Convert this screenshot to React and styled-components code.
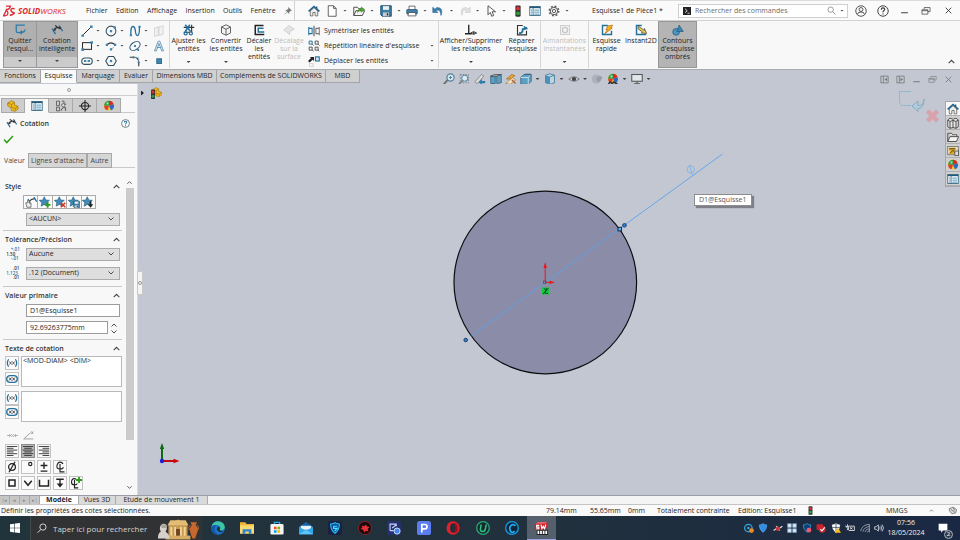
import React from "react";
import styled, { createGlobalStyle, css } from "styled-components";

const BLUE = "#23709b";
const INK = "#333";

const GlobalStyle = createGlobalStyle`
  *, *::before, *::after { box-sizing: border-box; }
  body { margin: 0; font-family: "Open Sans", "Noto Sans", sans-serif; font-size: 7px; line-height: 8px; color: #1e1e1e; }
  button, input, select, textarea { font: inherit; color: inherit; margin: 0; padding: 0; border: 0; border-radius: 0; background: none; outline: 0; }
`;

/* ---------- icons (16 x 16 drawings) ---------- */

const line = (d, stroke = BLUE, w = 1.8) => (
  <path d={d} fill="none" stroke={stroke} strokeWidth={w} />
);
const star = (
  <path d="M7 1l2 4.300 4.800.500-3.600 3.100 1.100 4.700L7 11.200l-4.200 2.400 1-4.700L.300 5.800l4.700-.500z" fill="#3e8cb8" stroke="#20577c" strokeWidth=".8" />
);
const beachBall = (
  <>
    <circle cx="8" cy="7.500" r="6.500" fill="#f4c61c" />
    <path d="M8 7.500V1a6.500 6.500 0 0 0-6.500 6.500z" fill="#2b9f48" />
    <path d="M8 7.500V1a6.500 6.500 0 0 1 6.200 4.500z" fill="#d92b24" />
    <path d="M8 7.500l6.200-2a6.500 6.500 0 0 1-3.500 8z" fill="#2a66c6" />
    <path d="M8 7.500H1.500a6.500 6.500 0 0 0 4.500 6.200z" fill="#e23b2e" />
    <circle cx="6" cy="4.500" r="1.500" fill="#fff" opacity=".6" />
  </>
);
const part = (
  <>
    <path d="M1 4l5-3 4 2v4l4 1 1 4-4 3-5-1-1-4-4-2z" fill="#f0b91e" stroke="#a8790b" />
    <path d="M1 4l5 2 4-3M6 6v4l5 1 4-3M11 11v3" fill="none" stroke="#a8790b" />
  </>
);
const listIcon = (
  <>
    <rect x="1" y="2" width="14" height="12" fill="#fff" stroke="#3f6b84" strokeWidth="1.200" />
    <path d="M1 3.200h14" stroke="#225a78" strokeWidth="2" />
    <path d="M5.500 4v10" stroke="#225a78" />
    <path d="M7 6.800h6.500M7 9.500h6.500M7 12.200h6.500M2.500 6.800h2M2.500 9.500h2M2.500 12.200h2" stroke="#2d7ea8" strokeWidth="1.100" />
  </>
);
const dimension = (
  <>
    {line("M4.500 7.500q3-4 7.500-2.500", INK, 1.600)}
    {line("M1.500 6L6 13.500", BLUE, 1.800)}
    {line("M11 2l4.500 7.500", BLUE, 1.800)}
    <path d="M3 9l1.500-4 2.500 3.500zM12 3l1.500 4-4-.500z" fill={INK} />
    <path d="M5.500 2l3 2" stroke={INK} strokeWidth="1.500" />
  </>
);
const cube = (
  <>
    <path d="M2 4l6-3 6 3v8l-6 3-6-3z" fill="#f2f2f2" stroke="#555" strokeWidth="1.200" />
    <path d="M2 4l6 3 6-3M8 7v8" fill="none" stroke="#555" strokeWidth="1.200" />
  </>
);
const home = (
  <>
    <path d="M3 8v6.500h3.500V10h3v4.500H13V8L8 3.500z" fill="#eee" stroke="#555" />
    <path d="M.800 8.500L8 2l7.200 6.500" fill="none" stroke="#1e5f86" strokeWidth="2" />
    <path d="M11.500 2v3" stroke="#1e5f86" strokeWidth="1.800" />
  </>
);
const folder = <path d="M1 3h5l1.500 2H13v2.500M1 3v11l3-6.500h11.500l-3 6.500H1" fill="#f3f3f3" stroke="#444" strokeWidth="1.200" />;
const floppy = (
  <>
    <path d="M1 1h14v14H3l-2-2z" fill="#3b7ea5" stroke="#1d4764" strokeWidth="1.200" />
    <rect x="4" y="1.500" width="8" height="5" fill="#e8eef2" />
    <rect x="4" y="10" width="8" height="5" fill="#c5cdd3" />
    <rect x="9" y="11" width="2" height="3" fill="#333" />
  </>
);
const traffic = (
  <>
    <rect x="4.500" y=".500" width="7" height="15" rx="1.500" fill="#333" />
    <circle cx="8" cy="4.500" r="2.500" fill="#e23030" />
    <circle cx="8" cy="11" r="2.500" fill="#27a53a" />
  </>
);
const brackets = (
  <>
    {line("M3.500 3Q0 8 3.500 13M12.500 3Q16 8 12.500 13", BLUE, 1.700)}
    {line("M4.500 6l3 4M7.500 6l-3 4M8.500 6l3 4M11.500 6l-3 4", "#444", 1.100)}
  </>
);
const capsule = (
  <>
    <rect x="1" y="3.500" width="14" height="9" rx="4.500" fill="none" stroke={BLUE} strokeWidth="1.900" />
    {line("M4 6l3.500 4M7.500 6L4 10M8.500 6l3.500 4M12 6l-3.500 4", "#333", 1.200)}
  </>
);
const restore = (c) => (
  <>
    {line("M5 5V2.500h9.500v6.500H11", c, 1.100)}
    {line("M1.500 6H11v7H1.500zM1.500 7.500H11", c, 1.100)}
  </>
);
const lines = (rows) => (
  <>
    {rows.map(([a, b], i) => (
      <path key={i} d={`M${a} ${2 + i * 2.400}H${b}`} stroke="#333" strokeWidth="1.200" />
    ))}
  </>
);
const shield = (c, edge) => <path d="M8 1q3 2 6 2 0 8-6 12Q2 11 2 3q3 0 6-2z" fill={c} stroke={edge} />;

const glyphs = {
  swoosh: (
    <>
      {line("M4 1.500h6q-1 4-5 5", "#dc2c34", 1.700)}
      {line("M5 5q-2 6-4.500 9.500 6 .500 6-4 0-3-3-2", "#dc2c34", 1.700)}
      {line("M15.500 5q-5-1-5 1.500t3.500 3.500-5 4", "#dc2c34", 1.900)}
    </>
  ),
  pin: <path d="M9 1l6 6-2 .500-3 3V13L3.500 6.500H6l3-3zM6 10l-5 5" fill="#777" stroke="#777" />,
  home,
  page: <path d="M3 1h7l3.500 3.500V15H3zM10 1v3.500h3.500" fill="#fff" stroke="#555" strokeWidth="1.200" />,
  open: (
    <>
      {folder}
      <path d="M6 10q0-5 5-5V2.500L15.500 6 11 9.500V7.500Q8 7 6 10z" fill="#4fae2f" stroke="#2c7a17" strokeWidth=".6" />
    </>
  ),
  floppy,
  printer: (
    <>
      <path d="M4 6V1.500h8V6" fill="#fff" stroke="#444" />
      <rect x="1" y="6" width="14" height="6" rx="1" fill="#3d7fa6" stroke="#1d4f70" />
      <path d="M3.500 10h9l1 4.500h-11z" fill="#fff" stroke="#444" />
    </>
  ),
  undo: <path d="M1 3v7h7L5.500 7.500Q11 4 12 14q4-11-6-10.500L4 5.500z" fill="#3a83ae" stroke="#1f5b80" strokeWidth=".7" />,
  redo: <path d="M15 3v7H8l2.500-2.500Q5 4 4 14 0 3 10 3.500l2 2z" fill="#e2e2e2" stroke="#c2c2c2" strokeWidth=".7" />,
  cursor: <path d="M4 1v12l3-3 2 5 2.500-1-2-5H14z" fill="#fff" stroke="#444" strokeWidth="1.200" />,
  traffic,
  list: listIcon,
  gear: (
    <>
      <circle cx="8" cy="8" r="5" fill="#eee" stroke="#555" strokeWidth="1.300" />
      <circle cx="8" cy="8" r="6.400" fill="none" stroke="#555" strokeWidth="1.800" strokeDasharray="2.500 2.530" />
      <circle cx="8" cy="8" r="2.200" fill="none" stroke="#555" strokeWidth="1.200" />
    </>
  ),
  prompt: (
    <>
      <rect width="16" height="16" fill="#222" />
      {line("M4 3.500l4.500 4L4 11.500M9 12.500h4", "#fff", 1.600)}
    </>
  ),
  lens: (
    <>
      <circle cx="6.500" cy="6.500" r="4.800" fill="none" stroke="#888" strokeWidth="1.500" />
      {line("M10 10l5 5", "#888", 1.700)}
    </>
  ),
  user: (
    <>
      <circle cx="8" cy="8" r="7" fill="none" stroke="#444" strokeWidth="1.200" />
      <circle cx="8" cy="6" r="2.600" fill="none" stroke="#444" strokeWidth="1.200" />
      {line("M3.500 12.500q0-3.200 4.500-3.200t4.500 3.200", "#444", 1.200)}
    </>
  ),
  help: (
    <>
      <circle cx="8" cy="8" r="7" fill="none" stroke="#333" strokeWidth="1.200" />
      {line("M5.700 6.200q0-2.400 2.300-2.400t2.300 2q0 1.200-1.300 1.900T8 9.800M8 11.200v1.400", "#333", 1.500)}
    </>
  ),
  helpBlue: (
    <>
      <circle cx="8" cy="8" r="7" fill="#fff" stroke="#4a6270" strokeWidth="1.400" />
      {line("M5.700 6.200q0-2.400 2.300-2.400t2.300 2q0 1.200-1.300 1.900T8 9.800M8 11.200v1.600", BLUE, 1.800)}
    </>
  ),
  minimize: line("M2 12h12", "#333", 1.700),
  restore: restore("#333"),
  close: line("M3 3l10 10M13 3L3 13", "#333", 1.600),
  exitSketch: (
    <>
      {line("M14.500 1.500H3V9q0 2.500 2.500 2.500H9", "#2b7cab", 1.700)}
      <path d="M15.500 6q0 6-5 6v2.500L7 11l3.500-3v2Q13 10 15.500 6z" fill="#2b7cab" />
    </>
  ),
  dimension,
  lineTool: (
    <>
      {line("M3 13L13 3", "#222", 1.300)}
      <path d="M.500 12.500h3.500v3H.500zM12 .500h3.500v3.500H12z" fill="#3b85b0" />
    </>
  ),
  circleTool: (
    <>
      <circle cx="8" cy="8" r="6.500" fill="none" stroke="#35505f" strokeWidth="1.400" />
      <path d="M6.500 6.500h3v3h-3zM11.500 1.500h3v3h-3z" fill="#3b85b0" />
    </>
  ),
  spline: (
    <>
      {line("M2.500 14Q2 2 5 2t3.500 6 3 6T14 2", BLUE, 1.800)}
      <path d="M1 12.500h3v2.500H1zM12.500 1h3v2.500h-3z" fill="#3b85b0" />
    </>
  ),
  plane: <path d="M2 4l5-1.500V14l-5 1zM8 2.500L13.500 1v11.500L8 14z" fill="#f0f0f0" stroke="#d4d4d4" strokeWidth="1.200" />,
  rectTool: (
    <>
      <rect x="2" y="3.500" width="12" height="9" fill="none" stroke="#333" strokeWidth="1.400" />
      <path d="M.500 11h3.500v3.500H.500zM12.500 1.500h3.500V5h-3.500z" fill="#3b85b0" />
    </>
  ),
  arcTool: (
    <>
      {line("M3 6q5-4.500 10 0", "#333", 1.500)}
      {line("M8 12.500l4-3", "#999", 1)}
      <path d="M1 5h3v3H1zM12 5h3v3h-3zM6.500 11h3v3h-3z" fill="#3b85b0" />
    </>
  ),
  ellipseTool: (
    <>
      <ellipse cx="8" cy="8" rx="7.500" ry="5" transform="rotate(-35 8 8)" fill="none" stroke="#35607a" strokeWidth="1.500" />
      <path d="M6.700 6.700h2.600v2.600H6.700zM11 12h2.500v2.500H11z" fill="#3b85b0" />
    </>
  ),
  letterA: line("M2 14.500L7 1.500h2l5 13h-2.500L8 4.500l-3.500 10zM5 10h6", "#5b93b4", 1.200),
  slotTool: (
    <>
      <rect x="1" y="4" width="14" height="8.500" rx="4.200" fill="none" stroke="#35505f" strokeWidth="1.500" />
      <path d="M4 6.800h2.500v2.500H4zM9.500 6.800H12v2.500H9.500z" fill="#3b85b0" />
      {line("M4 8h8", "#3b85b0", 1)}
    </>
  ),
  hexTool: (
    <>
      <path d="M4.500 2h7L15 8l-3.500 6h-7L1 8z" fill="none" stroke="#35505f" strokeWidth="1.500" />
      <path d="M6.500 6.500h3v3h-3z" fill="#3b85b0" />
    </>
  ),
  filletTool: (
    <>
      {line("M1 3h5q7 0 7 7v5", "#333", 1.500)}
      {line("M7 3h6v6", "#9cc0d6", 1)}
      <path d="M5 1.500h2v3H5zM11.500 9h3v2h-3z" fill="#3b85b0" />
    </>
  ),
  pointTool: <rect x="5" y="5" width="6.500" height="6.500" fill="#3b85b0" stroke="#225c80" />,
  trim: (
    <>
      {line("M1 4.500h14M1 11h7M11.500 1v10", "#333", 1.500)}
      {line("M3 1l7 9M9 1L3 10", BLUE, 2)}
      <circle cx="3.500" cy="12.500" r="2" fill="none" stroke={BLUE} strokeWidth="1.700" />
      <circle cx="10.500" cy="12.500" r="2" fill="none" stroke={BLUE} strokeWidth="1.700" />
    </>
  ),
  cube,
  offset: (
    <>
      {line("M14 2H3v12h12", "#222", 2)}
      {line("M14 5.500H7v5h8", BLUE, 2)}
    </>
  ),
  offsetSurface: <path d="M1 8l7-6 7 5-6 3v4z" fill="#e4e4e4" stroke="#cfcfcf" strokeWidth="1.200" />,
  mirror: (
    <>
      {line("M8 1v14", "#333", 1.200)}
      {line("M1 2.500v11M1 4.500h4.500v7H1", BLUE, 1.400)}
      {line("M15 2.500v11M15 4.500h-4.500v7H15", "#777", 1.400)}
    </>
  ),
  pattern: (
    <>
      <path d="M1.500 1.500h4v4h-4z" fill="none" stroke={BLUE} strokeWidth="1.300" />
      <path d="M9.500 1.500h4v4h-4zM1.500 9.500h4v4h-4zM9.500 9.500h4v4h-4z" fill="none" stroke="#555" strokeWidth="1.300" />
      {line("M5.500 5.500l2 2M13.500 5.500l2 2M5.500 13.500l2 1.500M13.500 13.500l1.500 1.500", "#555", 1.200)}
    </>
  ),
  move: (
    <>
      <rect x="10" y="2.500" width="5" height="5.500" fill="#d8ebf5" stroke={BLUE} strokeWidth="1.500" />
      <path d="M0 8l4-4-1.500-1.500H8V8L6.200 6.200 2 10z" fill="#222" />
      <path d="M2 11.500h5v4H2z" fill="none" stroke="#aaa" strokeDasharray="1.500 1" />
    </>
  ),
  relations: (
    <>
      {line("M5 1v12M0 13h9", "#222", 1.800)}
      {line("M7.500 12q4-4 8 0-4 4-8 0z", "#333", 1.200)}
      <circle cx="11.500" cy="12" r="1.400" fill="#333" />
    </>
  ),
  repair: (
    <>
      {line("M14 9v5.500H2V2h7", "#333", 1.500)}
      {line("M4 12q5 1 5-5 3 0 5-3", BLUE, 2.500)}
      {line("M10.500 3l2 3.500 3-.500", BLUE, 1.800)}
    </>
  ),
  snaps: (
    <>
      <rect x="2" y="2" width="12" height="12" fill="#f2f2f2" stroke="#cdcdcd" strokeWidth="1.300" />
      <circle cx="8" cy="8" r="3.500" fill="none" stroke="#c4c4c4" strokeWidth="1.500" />
    </>
  ),
  rapid: (
    <>
      {line("M9 2H2v12h12V9", BLUE, 1.900)}
      <path d="M9 2.500l6.500-1-2.500 4h2L5 13l3.500-5.500H6.500z" fill="#f5b61b" stroke="#b0601a" strokeWidth=".9" />
    </>
  ),
  instant: (
    <>
      {line("M9 2H2v12h13", BLUE, 1.900)}
      <path d="M4.500 3l8 5.500v-2.500l3 6.500-7-.500 1.500-1.500-6-4z" fill="#f1d14c" stroke="#444" />
    </>
  ),
  contours: (
    <>
      <circle cx="5.500" cy="10.500" r="4.500" fill="#4b94be" stroke="#225c80" />
      <path d="M9.500 1.500L15 10H6.500z" fill="#3b85b0" stroke="#225c80" />
    </>
  ),
  zoomFit: (
    <>
      <circle cx="10" cy="6" r="4.800" fill="#d6e6ef" stroke="#56809a" strokeWidth="1.600" />
      {line("M6 9.500L1 15", "#666", 2.200)}
      {line("M8 6h4M10 4v4", "#457b9d", 1.200)}
    </>
  ),
  zoomArea: (
    <>
      <path d="M3 2h11v11H3z" fill="none" stroke="#777" strokeDasharray="2 1.500" />
      <circle cx="9" cy="7" r="4" fill="#d8eaf4" stroke="#5e8fae" strokeWidth="1.400" />
      {line("M6 10l-5 5", "#777", 2)}
    </>
  ),
  previous: (
    <>
      <path d="M1 12L10 2l3 2-7 9q-4 2-5-1z" fill="#ddd" stroke="#777" />
      <path d="M6 12l4.500-4v2.500H15v3h-4.500V16z" fill="#2f7fae" />
    </>
  ),
  section: (
    <>
      <path d="M1 4h6v10H1zM9 3l6-1v11l-6 1z" fill="#5ea0c4" stroke="#285b78" />
      <path d="M1 4l5-2h9L9 4z" fill="#ddd" stroke="#444" />
    </>
  ),
  dynamic: (
    <>
      <path d="M2 8l7-6 4 1.500L8 8z" fill="#f0a02c" stroke="#8a5a17" strokeWidth=".8" />
      <path d="M1 14l9-8 4 3-7 6z" fill="#f3e3bd" stroke="#8a6a30" strokeWidth=".8" />
      {line("M9 9l5 5", "#b4531c", 1.500)}
    </>
  ),
  viewCube: (
    <>
      <path d="M1 6l4-4h10v9l-4 4H1z" fill="#5ea0c4" stroke="#345e78" />
      <path d="M1 6h10v9M11 6l4-4" fill="none" stroke="#e1edf4" />
      <path d="M6.500 1.500h8v3" fill="none" stroke="#345e78" />
    </>
  ),
  display: (
    <>
      <path d="M2 3l6-2 6 2v10l-6 2-6-2z" fill="#b9d5e4" stroke="#3a7292" />
      <path d="M2 3l6 2v10l-6-2z" fill="#4a90b8" />
      <path d="M8 5l6-2" stroke="#3a7292" />
    </>
  ),
  eye: (
    <>
      {line("M1 8q7-6 14 0-7 6-14 0z", "#777", 1.200)}
      <circle cx="8" cy="8" r="2.800" fill="#444" />
    </>
  ),
  globe: (
    <>
      <circle cx="7" cy="8" r="6" fill="#aeb2bb" />
      <path d="M7 7q4-5 8-2-1 6-6 8z" fill="#9a9ea7" />
    </>
  ),
  scene: (
    <>
      {beachBall}
      {line("M2 15l2-3 3 2 2-2 5 3", "#333", 2)}
    </>
  ),
  monitor: (
    <>
      <rect x="1" y="2" width="14" height="9" fill="#e2e5ea" stroke="#555" strokeWidth="1.400" />
      {line("M8 11v3M4 14.500h8", "#555", 1.500)}
    </>
  ),
  paneLeft: (
    <>
      {line("M1.500 2h13v12h-13zM6 2v12", "#777", 1.400)}
      <path d="M12.500 5v6L8 8z" fill="#777" />
    </>
  ),
  paneRight: (
    <>
      {line("M1.500 2h13v12h-13zM6 2v12", "#777", 1.400)}
      <path d="M8 5v6l4.500-3z" fill="#777" />
    </>
  ),
  minimizeGray: line("M2 12h12", "#777", 1.700),
  restoreGray: restore("#777"),
  closeGray: line("M3 3l10 10M13 3L3 13", "#777", 1.500),
  part,
  partRoot: (
    <>
      <g transform="translate(3 0) scale(.85)">{part}</g>
      <g transform="translate(-2 3) scale(.75 .85)">{traffic}</g>
    </>
  ),
  config: (
    <>
      {line("M2 1.500h4v6H2zM2 9.500h4v5H2zM9 1.500h3v4h3", "#666", 1.300)}
      <circle cx="11" cy="7" r="2.200" fill="#ddd" stroke="#555" />
      {line("M8 14.500q2-6 6-4v4", "#666", 1.500)}
    </>
  ),
  target: (
    <>
      <circle cx="8" cy="8" r="4.800" fill="none" stroke="#222" strokeWidth="1.400" />
      {line("M8 0v16M0 8h16", "#222", 1.400)}
    </>
  ),
  ball: beachBall,
  check: line("M1.500 8l4 4.500L14.500 3", "#2f9e17", 2.200),
  styleApply: (
    <>
      {line("M6 7q3-4 7-3", "#333", 1.500)}
      {line("M4 4l3 5M12 1.500l3.500 6", "#23709b", 1.700)}
      <path d="M1 9h2.500V5.500l2 .500v3.500H8V15H2.500z" fill="#eee" stroke="#555" />
    </>
  ),
  starAdd: (<>{star}<path d="M11.500 8v7.500M7.700 11.800h7.600" stroke="#2e9a1b" strokeWidth="2.500" /></>),
  starDel: (<>{star}<path d="M9 9l6 6M15 9l-6 6" stroke="#d8301f" strokeWidth="2" /></>),
  starSave: (<>{star}<g transform="translate(6.500 6.500) scale(.6)">{floppy}</g></>),
  starLoad: (<>{star}<path d="M11.500 7v5" stroke="#222" strokeWidth="2.200" /><path d="M8 11h7l-3.500 4.500z" fill="#222" /></>),
  up: line("M3 11l5-5 5 5", "#444", 1.900),
  down: line("M3 5l5 5 5-5", "#444", 1.900),
  brackets,
  capsule,
  dimArrow: (
    <>
      {line("M0 8h5M11 8h5M6 6l4 4M10 6l-4 4", "#aaa", 1.300)}
      <path d="M3 5.500v5L6 8zM13 5.500v5L10 8z" fill="#aaa" />
    </>
  ),
  dimSlope: line("M1 13h14M1 13L11 4M12 2l3 4M15 2l-3 4", "#999", 1.300),
  alignLeft: lines([[1, 15], [1, 10], [1, 15], [1, 10], [1, 15], [1, 10]]),
  alignCenter: lines([[1, 15], [3, 13], [1, 15], [3, 13], [1, 15], [3, 13]]),
  alignRight: lines([[1, 15], [6, 15], [1, 15], [6, 15], [1, 15], [6, 15]]),
  diameter: (<><circle cx="8" cy="8" r="4.500" fill="none" stroke="#222" strokeWidth="1.700" />{line("M4 15L12 1", "#222", 1.700)}</>),
  degree: <circle cx="11" cy="4" r="2.200" fill="none" stroke="#222" strokeWidth="1.500" />,
  plusMinus: line("M8 1.500v9M3.500 6h9M3.500 13.500h9", "#222", 1.800),
  centerline: line("M12 4Q11 1.500 8 1.500T4 6t4 4.500 4-2.500M8 4v10.500H14", "#222", 1.500),
  square: <rect x="4" y="4" width="8" height="8" fill="none" stroke="#222" strokeWidth="2" />,
  vee: line("M3 5l5 6 5-6", "#222", 2),
  counterbore: line("M2 3.500v8.500h12V3.500", "#222", 2),
  depth: (<>{line("M3 3h10M8 3v7", "#222", 1.800)}<path d="M3.500 8.500h9L8 14z" fill="#222" /></>),
  centerAdd: (
    <>
      {line("M8 3Q6 1.500 4 2.500T2 7t4 3.500 3-2M6 4v10.500H11", "#222", 1.500)}
      <path d="M12 0v8M8 4h8" stroke="#2e9a1b" strokeWidth="2.400" />
    </>
  ),
  tolerance: (
    <g fontSize="6" fontWeight="600">
      <text x="5" y="4" fill={BLUE}>+.01</text>
      <text x="-1" y="10" fill="#333">1.50</text>
      <text x="5" y="16" fill={BLUE}>-.01</text>
    </g>
  ),
  precision: (
    <g fontSize="6" fontWeight="600">
      <text x="8" y="4" fill="#333">.01</text>
      <text x="-1" y="10" fill={BLUE}>1.123</text>
      <text x="8" y="16" fill="#333">.01</text>
    </g>
  ),
  library: (
    <>
      <path d="M1 4l3-2.500L8 3l4-1.500L15 4v9l-3 2-4-1-4 1-3-2z" fill="#e8e8e8" stroke="#444" strokeWidth="1.200" />
      {line("M1 4l3 2 4-1.500L12 6l3-2M4 6v9M8 4.500V14M12 6v9", "#444", 1.200)}
    </>
  ),
  folder,
  palette: (
    <>
      <rect x="1" y="2" width="14" height="11" fill="#e9e2c9" stroke="#666" />
      <path d="M2.500 3.500h9v3l-3 2 2 3.500h-8l2-3.500-2-2z" fill="#e0a91f" />
      {line("M3 5h8M4 11l4-4 3 4", "#4b3f12", 1.200)}
      <rect x="10.500" y="8" width="5" height="6" fill="#ddd" stroke="#444" />
    </>
  ),
  plug: <path d="M2 5l7-3 6 4-1 6-7 2-4-5zM5 6l7 5M9 3l3 5" fill="#ddd" stroke="#555" strokeWidth="1.200" />,
  /* taskbar */
  windows: <path d="M0 2l7-1v6.500H0zM8 .900L16 0v7.500H8zM0 8.500h7V15l-7-1zM8 8.500h8V16l-8-1z" fill="#fff" />,
  searchWhite: (<><circle cx="9.500" cy="6.500" r="5" fill="none" stroke="#e6e6e6" strokeWidth="1.400" />{line("M6 10.500L1 15.500", "#e6e6e6", 1.500)}</>),
  edge: (
    <>
      <circle cx="8" cy="8" r="7.800" fill="#1a74c9" />
      <path d="M.300 7Q2 0 8.500.200 15.500 1 15.800 7.500 15 11 10 10.500q2-5.500-3-6T.300 7z" fill="#3ec5a5" />
      <path d="M6.500 9.500q0-3 2.500-3 2 .500 1 3.500-.500 2 5 1.500-3 2-5.500 1T6.500 9.500z" fill="#1f2f38" />
      <path d="M.300 7q2.500-3.500 6-2Q3 7 4.500 12l3.500 3.800Q0 15 .300 7z" fill="#1458a8" />
    </>
  ),
  explorer: (
    <>
      <path d="M0 1.500h6l1.500 2H16V14H0z" fill="#f0b73a" />
      <path d="M0 5h16v9.500H0z" fill="#fbd971" />
      <path d="M3 14.500V9.500h10v5h-3V12H6v2.500z" fill="#2f83d0" />
    </>
  ),
  store: (
    <>
      {line("M5 5V1.500h6V5", "#2fa5ea", 1.500)}
      <rect x=".500" y="3.500" width="15" height="12" rx="1.500" fill="#f4f4f4" />
      <path d="M4.500 6.500h3v3h-3z" fill="#f25022" />
      <path d="M8.500 6.500h3v3h-3z" fill="#7fba00" />
      <path d="M4.500 10.500h3v3h-3z" fill="#00a4ef" />
      <path d="M8.500 10.500h3v3h-3z" fill="#ffb900" />
    </>
  ),
  mail: (
    <>
      <path d="M0 6.500L8 1l8 5.500V15H0z" fill="#1564b0" />
      <path d="M2 5.500h12V10H2z" fill="#e8f3fb" />
      <path d="M0 6.500l8 5 8-5V15H0z" fill="#2fa5ea" />
      <path d="M0 15l8-5 8 5z" fill="#5cc4f6" />
    </>
  ),
  shieldApp: (<><rect width="16" height="16" rx="2" fill="#1b2145" /><path d="M8 2q3 1.500 5 1.500 0 7-5 10.500-5-3.500-5-10.500 2 0 5-1.500z" fill="#0b4a94" stroke="#23c4f2" strokeWidth="1.200" />{line("M10.500 6H6.500v2.500h4L7.500 11.500", "#4be0ff", 1.400)}</>),
  bugApp: (
    <>
      <circle cx="8" cy="8" r="7.500" fill="#1a0a0c" stroke="#962029" />
      <path d="M4 5l3 1 2-2 1 2 3 1-2 2 1 3-3-1-2 2-1-3-3-1 2-2z" fill="#e5303a" />
    </>
  ),
  captureApp: (
    <>
      <rect width="16" height="16" rx="2" fill="#25316f" />
      {line("M3.500 11V3.500h7V6M3.500 11h4M6 8l5-4", "#c9d2ff", 1.300)}
      <circle cx="11.500" cy="11.500" r="3.500" fill="#4687e8" stroke="#dce7ff" />
    </>
  ),
  pApp: (
    <>
      <rect width="16" height="16" rx="3" fill="#5c7df0" />
      {line("M5.500 13V4h3.500q2.500 0 2.500 2.500T9 9H5.500", "#fff", 1.900)}
    </>
  ),
  opera: (
    <>
      <ellipse cx="8" cy="8" rx="7.500" ry="7.800" fill="#e3202c" />
      <ellipse cx="8" cy="8" rx="3.300" ry="5.500" fill="#233039" />
      <path d="M8 2.500q5-1 5.500 5.500T8 13.500q3.500-1 3.500-5.500T8 2.500z" fill="#a10d18" />
    </>
  ),
  uApp: (<><circle cx="8" cy="8" r="7.200" fill="#15282c" stroke="#28a876" strokeWidth="1.500" />{line("M6 4L5 9q0 3 2.700 3t3-3l1-5", "#2fc086", 1.700)}</>),
  cApp: (<><circle cx="8" cy="8" r="7.200" fill="#102438" stroke="#169be0" strokeWidth="1.500" />{line("M12 5.500Q9.500 3 7 5T6 11t5 .500", "#22adf2", 2)}</>),
  swApp: (
    <>
      <path d="M1 3l4-2h10v7l-3 2H1z" fill="#c8202a" />
      <path d="M1 3l4-2h10l-2 2z" fill="#e8616a" />
      {line("M6 5H3v2h2.500v2H2.500M8 4l1 5 1.500-3L12 9l1.500-5", "#fff", 1.300)}
      <rect x="3" y="10" width="13" height="6" fill="#222" />
      <path d="M4 13h11" stroke="#fff" strokeWidth="3.500" strokeDasharray="2 1" />
    </>
  ),
  trayEye: (<><circle cx="7" cy="8" r="6" fill="none" stroke="#34a8df" strokeWidth="2" /><circle cx="7" cy="8" r="2" fill="#34a8df" /><circle cx="12" cy="12" r="3.800" fill="#f08a24" /></>),
  trayShield: shield("#2f8fe6", "#5aaef5"),
  trayRed: (<>{line("M1 12l4-3M15 5l-4 3M5 5l3 3M11 12l-3-3", "#d8dce0", 2)}<circle cx="8" cy="9" r="3.500" fill="#cf3640" /></>),
  trayGrid: <path d="M1 1h6v6H1zM9 1h6v6H9zM1 9h6v6H1zM9 9h6v6H9z" fill="#dfe8f2" stroke="#7aa0c8" />,
  trayGuard: (<>{shield("#123d78", "#39b6f5")}<circle cx="11" cy="11.500" r="3.800" fill="#ef5a6b" /></>),
  trayCheck: (<><rect x="1" y="2" width="10" height="9" fill="#d3202a" /><circle cx="10" cy="10" r="5.500" fill="#c9252d" />{line("M7 10l2.500 2.500L14 7", "#fff", 1.800)}</>),
  trayDefender: (<>{shield("#fff", "#fff")}{line("M8 1v13M2 7h12", "#26354c", 1.200)}<path d="M11 7l5 8.500H6z" fill="#f6bd22" /></>),
  battery: line("M5 5h10v7H6M1 4l5 7M4 2v4M1 6h5q0 5-3 5M8 7l4 3M12 7l-4 3", "#eee", 1.300),
  wifi: line("M1 13Q3 3 15 2M4.500 14Q6 7 15 5.500M8 14.500q1-5 7-5.500M11.500 15q.500-2 3.500-2.500M15 2v13", "#aeb6c0", 1.200),
  sound: line("M1 6h2.500L7 3v10L3.500 10H1zM9 6q1.500 2 0 4M11 4q3 4 0 8M13 2.500q4.500 5.500 0 11", "#e4e8ee", 1.200),
  note: <path d="M1 1h14v11H8l-3 3.500V12H1z" fill="#fff" />,
};

const Svg = styled.svg`
  display: block;
  flex: none;
  width: ${(p) => p.$size}px;
  height: ${(p) => p.$size}px;
`;
const Icon = ({ name, size = 11 }) => (
  <Svg viewBox="0 0 16 16" $size={size} aria-hidden="true">{glyphs[name]}</Svg>
);

const Caret = styled.span`
  flex: none;
  width: 4px;
  height: 2px;
  background: #444;
  clip-path: polygon(0 0, 100% 0, 50% 100%);
`;

/* ---------- title bar ---------- */

const Page = styled.div`
  display: flex;
  flex-direction: column;
  min-height: 100vh;
  background: #c3c7d2;
`;
const TitleBar = styled.header`
  display: flex;
  align-items: center;
  height: 21px;
  background: #fafafa;
  border-top: 1px solid #dcdcdc;
  border-bottom: 1px solid #d2d2d2;
`;
const Logo = styled.div`
  display: flex;
  align-items: center;
  gap: 3px;
  width: 76px;
  padding-left: 3px;
  color: #dc2c34;
  font-style: italic;
  font-size: 8px;
`;
const Menu = styled.nav`
  display: flex;
  align-items: center;
  justify-content: space-between;
  width: 219px;
  height: 20px;
  padding: 0 2px 0 10px;
  border-right: 1px solid #d2d2d2;
`;
const PlainButton = styled.button`
  display: flex;
  align-items: center;
  justify-content: center;
  flex: none;
  width: ${(p) => (p.$w ? p.$w + "px" : "auto")};
  height: 14px;
  white-space: nowrap;
`;
const QuickBar = styled.div`
  display: flex;
  align-items: center;
  padding-left: 7px;
`;
const DocTitle = styled.h1`
  flex: 1;
  margin: 0;
  padding-left: 21px;
  font-size: 7px;
  font-weight: 400;
`;
const SearchBox = styled.label`
  display: flex;
  align-items: center;
  gap: 4px;
  width: 170px;
  height: 14px;
  padding: 0 3px 0 4px;
  background: #fff;
  border: 1px solid #cfcfcf;
`;
const SearchInput = styled.input`
  flex: 1;
  min-width: 0;
  &::placeholder { color: #6c6c6c; opacity: 1; }
`;
const WindowButtons = styled.div`
  display: flex;
  align-items: center;
  padding-left: 2px;
`;

const quick = [
  ["home", 24], ["page", 12, 14], ["open", 14, 12], ["floppy", 15, 12], ["printer", 14, 12],
  ["undo", 14, 13], ["redo", 13, 13], ["cursor", 14, 12], ["traffic", 16], ["list", 18], ["gear", 19, 8],
];

/* ---------- ribbon ---------- */

const Ribbon = styled.section`
  display: flex;
  height: 49px;
  padding: 0 0 1px 3px;
  background: #f8f8f8;
  border-bottom: 1px solid #a9abb0;
`;
const Big = styled.button`
  display: grid;
  grid-template-rows: 14px 1fr 12px;
  justify-items: center;
  align-items: center;
  flex: none;
  width: ${(p) => p.$w}px;
  padding-top: 2px;
  line-height: 8px;
  color: ${(p) => (p.$off ? "#bdbdbd" : "#1e1e1e")};
  ${(p) => p.$on && css`
    background: linear-gradient(#b0b0b0 35px, #cbcbcb 35px);
    border: 1px solid #979797;
    border-right-width: ${p.$joined ? 0 : 1}px;
    padding-top: 1px;
  `}
  ${(p) => p.$solid && css`background: #b4b4b4;`}
`;
const BigLabel = styled.span`
  align-self: start;
  white-space: pre;
`;
const ToolGrid = styled.div`
  display: grid;
  grid-template-columns: repeat(4, 24px);
  align-content: end;
  width: 91px;
`;
const ToolCell = styled.button`
  display: flex;
  align-items: center;
  gap: 3px;
  height: 15px;
  padding-left: 3px;
`;
const Rule = styled.span`
  flex: none;
  width: 1px;
  background: #d6d6d6;
`;
const ListTools = styled.div`
  display: grid;
  align-content: end;
  width: 133px;
`;
const ListTool = styled.button`
  display: flex;
  align-items: center;
  gap: 4px;
  height: 15px;
  padding: 0 4px 0 3px;
  text-align: left;
  & > span:nth-of-type(1) { flex: 1; white-space: nowrap; }
`;
const RibbonEnd = styled.div`
  display: flex;
  flex: 1;
  align-items: flex-end;
  justify-content: flex-end;
  padding: 0 4px 0 0;
`;

const sketchTools = [
  ["lineTool", "Ligne", 1], ["circleTool", "Cercle", 1], ["spline", "Spline", 1], ["plane", "Plan"],
  ["rectTool", "Rectangle", 1], ["arcTool", "Arc", 1], ["ellipseTool", "Ellipse", 1], ["letterA", "Texte"],
  ["slotTool", "Rainure", 1], ["hexTool", "Polygone"], ["filletTool", "Congé", 1], ["pointTool", "Point"],
];

const BigTool = ({ icon, label, caret, ...rest }) => (
  <Big {...rest}>
    <Icon name={icon} size={12} />
    <BigLabel>{label}</BigLabel>
    {caret && <Caret />}
  </Big>
);

/* ---------- command tabs & view toolbar ---------- */

const Strip = styled.div`
  display: flex;
  align-items: center;
  height: 14px;
`;
const CommandTabs = styled.div`
  display: flex;
  flex: none;
  height: 13px;
  align-self: start;
`;
const CommandTab = styled.button`
  width: ${(p) => p.$w}px;
  white-space: nowrap;
  background: ${(p) => (p.$active ? "#fafafa" : "#d0d0d0")};
  border-right: 1px solid #a2a4a8;
  border-bottom: 1px solid ${(p) => (p.$active ? "#fafafa" : "#a2a4a8")};
`;
const ViewTools = styled.div`
  display: flex;
  flex: 1;
  align-items: center;
  padding: 4px 0 0 81px;
`;
const DocButtons = styled.div`
  display: flex;
  padding: 4px 4px 0 0;
`;
const viewTools = [
  ["zoomFit", 15], ["zoomArea", 16], ["previous", 16], ["section", 15], ["dynamic", 15],
  ["viewCube", 16, 7], ["display", 17, 7], ["eye", 17, 6], ["globe", 18], ["scene", 13, 11], ["monitor", 14, 9],
];

/* ---------- property panel ---------- */

const Body = styled.main`
  display: flex;
  flex: 1;
  min-height: 411px;
`;
const Panel = styled.aside`
  display: flex;
  flex-direction: column;
  flex: none;
  width: 138px;
  background: #f8f8f8;
  border-right: 1px solid #d9dbe0;
`;
const Grip = styled.div`
  display: grid;
  place-items: center;
  height: 12px;
  border-bottom: 1px solid #cfcfcf;
`;
const Dot = styled.span`
  width: 4px;
  height: 4px;
  border: 1px solid #999;
  border-radius: 50%;
`;
const PanelTabs = styled.div`
  display: flex;
  height: 15px;
  margin: 2px 2px 0 1px;
  border-bottom: 1px solid #c9c9c9;
`;
const PanelTab = styled.button`
  display: grid;
  place-items: center;
  width: 24px;
  margin-bottom: -1px;
  background: ${(p) => (p.$active ? "#f8f8f8" : "#cdcdcd")};
  border: 1px solid #a8a8a8;
  border-left-width: ${(p) => (p.$first ? 1 : 0)}px;
  border-bottom-color: ${(p) => (p.$active ? "#f8f8f8" : "#a8a8a8")};
`;
const PanelHead = styled.div`
  display: flex;
  align-items: center;
  gap: 3px;
  height: 20px;
  padding: 0 7px 0 6px;
  & > h2 { flex: 1; }
`;
const Heading = styled.h2`
  margin: 0;
  font-size: 7px;
  line-height: 9px;
  font-weight: 600;
  color: #333;
`;
const Accept = styled.button`
  display: block;
  width: 12px;
  height: 12px;
  margin: 0 0 0 3px;
`;
const SubTabs = styled.div`
  display: flex;
  height: 15px;
  margin: 8px 2px 0 1px;
  border-bottom: 1px solid #c9c9c9;
`;
const SubTab = styled.button`
  width: ${(p) => p.$w}px;
  margin-bottom: -1px;
  white-space: nowrap;
  color: #444;
  background: ${(p) => (p.$active ? "#f8f8f8" : "#d6d6d6")};
  border: 1px solid ${(p) => (p.$active ? "#f8f8f8" : "#a8a8a8")};
`;
const Scroll = styled.div`
  display: flex;
  flex: 1;
  padding-top: 10px;
`;
const Sections = styled.div`
  flex: 1;
  padding: 0 3px 0 3px;
`;
const Track = styled.div`
  display: flex;
  flex-direction: column;
  align-items: center;
  width: 9px;
  margin-right: 3px;
  padding: 1px 0 4px;
`;
const Thumb = styled.div`
  width: 8px;
  height: 252px;
  margin: 2px 0 auto;
  background: #cbcbcb;
`;
const Section = styled.section`
  height: ${(p) => p.$h}px;
  border-bottom: ${(p) => (p.$last ? 0 : 1)}px solid #c9c9c9;
`;
const SectionHead = styled.div`
  display: flex;
  justify-content: space-between;
  align-items: center;
  height: 16px;
  padding: 0 1px 0 2px;
`;
const StyleRow = styled.div`
  display: flex;
  width: 73px;
  margin: 1px 0 3px 20px;
`;
const SquareButton = styled.button`
  display: grid;
  place-items: center;
  width: 14px;
  height: 14px;
  background: ${(p) => (p.$on ? "#b9b9b9" : "#fbfbfb")};
  border: 1px solid ${(p) => (p.$on ? "#8b8b8b" : "#c2c2c2")};
`;
const StyleButton = styled(SquareButton)`
  flex: 1;
  border-color: #aaa;
  & + & { border-left-width: 0; }
`;
const Field = styled.label`
  display: flex;
  align-items: center;
  height: 14px;
  margin-bottom: ${(p) => p.$gap || 0}px;
`;
const FieldIcon = styled.span`
  display: grid;
  place-items: center;
  width: 23px;
  padding-right: 4px;
  & > svg { overflow: visible; }
`;
const SelectWrap = styled.span`
  display: grid;
  grid-template-columns: 1fr 12px;
  align-items: center;
  flex: 1;
  height: 13px;
  margin-right: 2px;
  background: #dedede;
  border: 1px solid #ababab;
  & > select { grid-area: 1 / 1 / 2 / 3; appearance: none; padding-left: 2px; height: 11px; }
  & > svg { grid-area: 1 / 2; pointer-events: none; }
`;
const TextInput = styled.input`
  width: ${(p) => p.$w}px;
  height: 13px;
  padding-left: 3px;
  background: #fff;
  border: 1px solid #9c9c9c;
`;
const Spin = styled.span`
  display: grid;
  gap: 1px;
  padding-left: 2px;
`;
const SpinButton = styled.button`
  display: block;
  width: 9px;
  height: 6px;
  overflow: hidden;
`;
const TextRow = styled.div`
  display: flex;
  gap: 2px;
  margin-bottom: 4px;
  padding-left: 2px;
`;
const Stack = styled.div`
  display: grid;
  gap: ${(p) => p.$gap}px;
  align-content: start;
`;
const TextBox = styled.textarea`
  width: 101px;
  height: 31px;
  padding: 0 1px;
  background: #fff;
  border: 1px solid #b9b9b9;
  resize: none;
`;
const Symbols = styled.div`
  display: flex;
  gap: 2px;
  padding: ${(p) => (p.$spaced ? 2 : 0)}px 0 2px 2px;
`;

const Choice = ({ icon, label, options, gap }) => (
  <Field $gap={gap}>
    <FieldIcon>{icon && <Icon name={icon} size={12} />}</FieldIcon>
    <SelectWrap>
      <select aria-label={label}>{options.map((o) => <option key={o}>{o}</option>)}</select>
      <Icon name="down" size={8} />
    </SelectWrap>
  </Field>
);
const Head = ({ children }) => (
  <SectionHead><Heading>{children}</Heading><Icon name="up" size={9} /></SectionHead>
);

/* ---------- drawing area ---------- */

const Canvas = styled.div`
  position: relative;
  flex: 1;
  background: #c3c7d2;
`;
const Drawing = styled.svg`
  position: absolute;
  inset: 0;
  width: 100%;
  height: 100%;
`;
const Splitter = styled.button`
  position: absolute;
  left: -1px;
  top: 187px;
  display: grid;
  place-items: center;
  width: 6px;
  height: 24px;
  background: #f4f4f4;
  border: 1px solid #c8c8c8;
`;
const Tree = styled.div`
  position: absolute;
  left: 3px;
  top: 3px;
  display: flex;
  align-items: center;
  gap: 6px;
`;
const TreeArrow = styled.button`
  width: 3px;
  height: 5px;
  background: #222;
  clip-path: polygon(0 0, 100% 50%, 0 100%);
`;
const Tip = styled.div`
  position: absolute;
  left: 556px;
  top: 110px;
  height: 12px;
  padding: 1px 4px;
  color: #555;
  background: #fff;
  border: 1px solid #8d8d8d;
  box-shadow: 2px 2px 1px #7e8089;
`;
const TaskPane = styled.nav`
  position: absolute;
  right: 0;
  top: 17px;
  display: grid;
  width: 15px;
  border: 1px solid #a5a7ab;
  border-right: 0;
`;
const PaneButton = styled.button`
  display: grid;
  place-items: center;
  height: 14px;
  background: ${(p) => (p.$active ? "#f8f8f8" : "#d0d0d0")};
  border-bottom: 1px solid #b0b0b0;
`;
const Confirm = styled.div`
  position: absolute;
  right: 20px;
  top: 6px;
  width: 42px;
  height: 36px;
  opacity: 0.65;
`;

/* ---------- footer ---------- */

const SheetTabs = styled.div`
  display: flex;
  height: 10px;
  background: #f4f4f4;
  border-top: 1px solid #9b9da6;
  border-bottom: 1px solid #c4c4c4;
`;
const SheetNav = styled.button`
  width: 10px;
  color: #888;
  background: #c6c6c6;
  border-right: 1px solid #aaa;
  font-size: 5px;
  line-height: 7px;
`;
const SheetTab = styled.button`
  width: ${(p) => p.$w}px;
  line-height: 8px;
  white-space: nowrap;
  font-weight: ${(p) => (p.$active ? 700 : 400)};
  background: ${(p) => (p.$active ? "#fff" : "#dadada")};
  border-right: 1px solid #aaa;
`;
const Status = styled.footer`
  display: flex;
  align-items: center;
  height: 11px;
  background: #f9f9f9;
  white-space: nowrap;
`;
const StatusItem = styled.span`
  flex: none;
  width: ${(p) => p.$w}px;
`;
const StatusMain = styled.span`
  flex: 1;
  padding-left: 1px;
`;

const Taskbar = styled.nav`
  display: flex;
  height: 24px;
  color: #f0f0f0;
  background: linear-gradient(90deg, #22343b, #20303d 60%, #1a2843);
`;
const Start = styled.button`
  display: grid;
  place-items: center;
  width: 30px;
`;
const TaskSearch = styled.label`
  display: flex;
  align-items: center;
  gap: 6px;
  width: 172px;
  padding: 0 3px 0 6px;
  background: #303234;
  border-left: 1px solid #44494c;
  & > input { flex: 1; min-width: 0; font-size: 8px; }
  & > input::placeholder { color: #d5d5d5; opacity: 1; }
`;
const Monument = styled.svg`
  flex: none;
  width: 42px;
  height: 24px;
`;
const Apps = styled.div`
  display: flex;
  width: 354px;
  padding-left: 1px;
`;
const AppButton = styled.button`
  display: grid;
  place-items: center;
  flex: 1;
  border-bottom: 1px solid ${(p) => (p.$active ? "#9da0e8" : "transparent")};
  background: ${(p) => (p.$active ? "#56606c" : "transparent")};
`;
const Tray = styled.div`
  display: flex;
  flex: 1;
  align-items: center;
  justify-content: flex-end;
`;
const TrayButton = styled.button`
  display: grid;
  place-items: center;
  width: ${(p) => p.$w}px;
`;
const Clock = styled.time`
  width: 40px;
  text-align: center;
  line-height: 10px;
`;
const Notify = styled.button`
  position: relative;
  width: 34px;
  height: 24px;
  display: grid;
  place-items: center;
`;
const Badge = styled.span`
  position: absolute;
  right: 7px;
  bottom: 1px;
  width: 9px;
  height: 9px;
  border-radius: 50%;
  font-size: 6px;
  color: #fff;
  background: #333c4c;
  border: 1px solid #a8b0bc;
  line-height: 7px;
`;

export default function App() {
  return (
    <Page>
      <GlobalStyle />
      <TitleBar>
        <Logo><Icon name="swoosh" size={12} /><span><b>SOLID</b>WORKS</span></Logo>
        <Menu aria-label="Menu principal">
          {["Fichier", "Edition", "Affichage", "Insertion", "Outils", "Fenêtre"].map((m) => (
            <PlainButton key={m}>{m}</PlainButton>
          ))}
          <PlainButton aria-label="Épingler"><Icon name="pin" size={8} /></PlainButton>
        </Menu>
        <QuickBar>
          {quick.map(([icon, w, c]) => (
            <React.Fragment key={icon}>
              <PlainButton $w={w} aria-label={icon}><Icon name={icon} size={12} /></PlainButton>
              {c && <PlainButton $w={c} aria-label={icon + " options"}><Caret /></PlainButton>}
            </React.Fragment>
          ))}
        </QuickBar>
        <DocTitle>Esquisse1 de Pièce1 *</DocTitle>
        <SearchBox>
          <Icon name="prompt" size={8} />
          <SearchInput aria-label="Rechercher des commandes" placeholder="Rechercher des commandes" />
          <Icon name="lens" size={9} />
          <Caret />
        </SearchBox>
        <WindowButtons>
          {[["user", 22, 12], ["help", 21, 12], ["minimize", 22, 9], ["restore", 21, 10], ["close", 24, 9]].map(([n, w, s]) => (
            <PlainButton key={n} $w={w} aria-label={n}><Icon name={n} size={s} /></PlainButton>
          ))}
        </WindowButtons>
      </TitleBar>

      <Ribbon>
        <BigTool icon="exitSketch" label={"Quitter\nl'esqui..."} caret $w={33} $on $joined />
        <BigTool icon="dimension" label={"Cotation\nintelligente"} caret $w={42} $on />
        <ToolGrid>
          {sketchTools.map(([icon, label, c]) => (
            <ToolCell key={icon} aria-label={label}><Icon name={icon} size={12} />{c && <Caret />}</ToolCell>
          ))}
        </ToolGrid>
        <Rule />
        <BigTool icon="trim" label={"Ajuster les\nentités"} caret $w={37} />
        <BigTool icon="cube" label={"Convertir\nles entités"} caret $w={38} />
        <BigTool icon="offset" label={"Décaler\nles\nentités"} $w={28} />
        <BigTool icon="offsetSurface" label={"Décalage\nsur la\nsurface"} $w={32} $off />
        <ListTools>
          <ListTool><Icon name="mirror" size={12} /><span>Symétriser les entités</span></ListTool>
          <ListTool><Icon name="pattern" size={12} /><span>Répétition linéaire d'esquisse</span><Caret /></ListTool>
          <ListTool><Icon name="move" size={12} /><span>Déplacer les entités</span><Caret /></ListTool>
        </ListTools>
        <Rule />
        <BigTool icon="relations" label={"Afficher/Supprimer\nles relations"} caret $w={64} />
        <BigTool icon="repair" label={"Réparer\nl'esquisse"} $w={37} />
        <Rule />
        <BigTool icon="snaps" label={"Aimantations\ninstantanées"} caret $w={47} $off />
        <Rule />
        <BigTool icon="rapid" label={"Esquisse\nrapide"} $w={35} />
        <BigTool icon="instant" label="Instant2D" $w={34} />
        <BigTool icon="contours" label={"Contours\nd'esquisse\nombrés"} $w={39} $on $solid />
        <RibbonEnd><PlainButton $w={10} aria-label="Réduire"><Icon name="up" size={9} /></PlainButton></RibbonEnd>
      </Ribbon>

      <Strip>
        <CommandTabs role="tablist">
          {[["Fonctions", 41], ["Esquisse", 36], ["Marquage", 43], ["Evaluer", 33], ["Dimensions MBD", 64], ["Compléments de SOLIDWORKS", 109], ["MBD", 34]].map(([t, w]) => (
            <CommandTab key={t} role="tab" $w={w} $active={t === "Esquisse"}>{t}</CommandTab>
          ))}
        </CommandTabs>
        <ViewTools>
          {viewTools.map(([icon, w, c]) => (
            <React.Fragment key={icon}>
              <PlainButton $w={w} aria-label={icon}><Icon name={icon} size={12} /></PlainButton>
              {c && <PlainButton $w={c} aria-label={icon + " options"}><Caret /></PlainButton>}
            </React.Fragment>
          ))}
        </ViewTools>
        <DocButtons>
          {["paneLeft", "paneRight", "minimizeGray", "restoreGray", "closeGray"].map((n) => (
            <PlainButton key={n} $w={16} aria-label={n}><Icon name={n} size={9} /></PlainButton>
          ))}
        </DocButtons>
      </Strip>

      <Body>
        <Panel>
          <Grip><Dot /></Grip>
          <PanelTabs>
            {["part", "list", "config", "target", "ball"].map((n, i) => (
              <PanelTab key={n} $first={i === 0} $active={n === "list"} aria-label={n}><Icon name={n} size={12} /></PanelTab>
            ))}
          </PanelTabs>
          <PanelHead>
            <Icon name="dimension" size={11} />
            <Heading>Cotation</Heading>
            <Icon name="helpBlue" size={9} />
          </PanelHead>
          <Accept aria-label="OK"><Icon name="check" size={11} /></Accept>
          <SubTabs>
            <SubTab $w={27} $active>Valeur</SubTab>
            <SubTab $w={59}>Lignes d'attache</SubTab>
            <SubTab $w={25}>Autre</SubTab>
          </SubTabs>
          <Scroll>
            <Sections>
              <Section $h={53}>
                <Head>Style</Head>
                <StyleRow>
                  {["styleApply", "starAdd", "starDel", "starSave", "starLoad"].map((n) => (
                    <StyleButton key={n} aria-label={n}><Icon name={n} size={12} /></StyleButton>
                  ))}
                </StyleRow>
                <Choice label="Style" options={["<AUCUN>"]} />
              </Section>
              <Section $h={56}>
                <Head>Tolérance/Précision</Head>
                <Choice icon="tolerance" label="Tolérance" options={["Aucune"]} gap={5} />
                <Choice icon="precision" label="Précision" options={[".12 (Document)"]} />
              </Section>
              <Section $h={53}>
                <Head>Valeur primaire</Head>
                <Field $gap={3}><FieldIcon /><TextInput aria-label="Nom de la cote" $w={94} defaultValue="D1@Esquisse1" /></Field>
                <Field>
                  <FieldIcon />
                  <TextInput aria-label="Valeur" $w={82} defaultValue="92.69263775mm" />
                  <Spin>
                    <SpinButton type="button" aria-label="Augmenter"><Icon name="up" size={8} /></SpinButton>
                    <SpinButton type="button" aria-label="Diminuer"><Icon name="down" size={8} /></SpinButton>
                  </Spin>
                </Field>
              </Section>
              <Section $h={150} $last>
                <Head>Texte de cotation</Head>
                <TextRow>
                  <Stack $gap={2}>
                    <SquareButton aria-label="Parenthèses"><Icon name="brackets" size={12} /></SquareButton>
                    <SquareButton aria-label="Cote d'inspection"><Icon name="capsule" size={12} /></SquareButton>
                  </Stack>
                  <TextBox aria-label="Texte" defaultValue="<MOD-DIAM> <DIM>" />
                </TextRow>
                <TextRow>
                  <Stack $gap={0}>
                    <SquareButton aria-label="Parenthèses"><Icon name="brackets" size={12} /></SquareButton>
                    <SquareButton aria-label="Cote d'inspection"><Icon name="capsule" size={12} /></SquareButton>
                  </Stack>
                  <TextBox aria-label="Texte secondaire" />
                </TextRow>
                <Symbols $spaced>
                  {["dimArrow", "dimSlope"].map((n) => <PlainButton key={n} $w={14} aria-label={n}><Icon name={n} size={11} /></PlainButton>)}
                </Symbols>
                <Symbols>
                  {["alignLeft", "alignCenter", "alignRight"].map((n) => (
                    <SquareButton key={n} $on={n === "alignCenter"} aria-label={n}><Icon name={n} size={12} /></SquareButton>
                  ))}
                </Symbols>
                <Symbols>
                  {["diameter", "degree", "plusMinus", "centerline"].map((n) => (
                    <SquareButton key={n} aria-label={n}><Icon name={n} size={12} /></SquareButton>
                  ))}
                </Symbols>
                <Symbols>
                  {["square", "vee", "counterbore", "depth", "centerAdd"].map((n) => (
                    <SquareButton key={n} aria-label={n}><Icon name={n} size={12} /></SquareButton>
                  ))}
                </Symbols>
              </Section>
            </Sections>
            <Track><Icon name="up" size={7} /><Thumb /><Icon name="down" size={7} /></Track>
          </Scroll>
        </Panel>

        <Canvas>
          <Drawing viewBox="138 84 822 411" role="img" aria-label="Esquisse d'un cercle coté">
            <circle cx="545.300" cy="282.500" r="91.300" fill="#8a8ca8" stroke="#0c0c10" strokeWidth="1.200" />
            <path d="M471.500 336L722.500 154" stroke="#5ca2ea" strokeWidth=".9" />
            <circle cx="690.800" cy="169.500" r="3.600" fill="none" stroke="#74b0ec" strokeWidth=".8" />
            <path d="M689.300 164.500l3 10.500" stroke="#74b0ec" strokeWidth=".8" />
            <circle cx="465.700" cy="340" r="1.800" fill="#2f7fd0" stroke="#153a60" strokeWidth=".9" />
            <circle cx="624.500" cy="225.300" r="1.800" fill="#2f7fd0" stroke="#153a60" strokeWidth=".9" />
            <rect x="618" y="227.300" width="3.600" height="3.600" fill="#5bb0ff" stroke="#123" strokeWidth=".9" />
            <path d="M545.200 282V267M545 282.300h6" stroke="#f01414" />
            <path d="M543.500 268l1.700-6 1.700 6zM549.500 280.700l5.500 1.600-5.500 1.600z" fill="#f01414" />
            <rect x="543.500" y="281" width="2.500" height="2.500" fill="none" stroke="#445" strokeWidth=".6" />
            <rect x="542" y="287.500" width="7" height="7" fill="#14c83c" />
            <path d="M543 294l5.500-6M544 289h3l-2.500 4 3.500.500" fill="none" stroke="#042" strokeWidth=".9" />
            <path d="M162 460V447" stroke="#0a6a12" strokeWidth="2" />
            <path d="M159.800 449l2.200-6 2.200 6z" fill="#0a6a12" />
            <path d="M162 461h12" stroke="#c80808" strokeWidth="2" />
            <path d="M173.500 458.700l6 2.300-6 2.300z" fill="#c80808" />
            <circle cx="162" cy="461" r="2.200" fill="#1822d8" />
          </Drawing>
          <Splitter aria-label="Replier le panneau"><Dot /></Splitter>
          <Tree><TreeArrow aria-label="Développer l'arbre" /><Icon name="partRoot" size={12} /></Tree>
          <Tip role="tooltip">D1@Esquisse1</Tip>
          <Confirm>
            <svg width="42" height="36" viewBox="0 0 42 36" aria-hidden="true">
              <path d="M13 1.500H1.500V11q0 4.500 4 4.500H13" fill="none" stroke="#78b0cc" />
              <path d="M26 9q0 7-6 6.500V11l-6 5 6 5.500v-3q6 0 6-9.500z" fill="#a3cfe4" stroke="#6c9db4" />
              <path d="M29.500 21l10 10M39.500 21l-10 10" stroke="#e28f97" strokeWidth="4.500" />
            </svg>
          </Confirm>
          <TaskPane aria-label="Volet des tâches">
            {["home", "library", "folder", "palette", "ball", "list"].map((n) => (
              <PaneButton key={n} $active={n === "home"} aria-label={n}><Icon name={n} size={12} /></PaneButton>
            ))}
          </TaskPane>
        </Canvas>
      </Body>

      <SheetTabs>
        {["|◂", "◂", "▸", "▸|"].map((n) => <SheetNav key={n}>{n}</SheetNav>)}
        <SheetTab $w={39} $active>Modèle</SheetTab>
        <SheetTab $w={37}>Vues 3D</SheetTab>
        <SheetTab $w={92}>Etude de mouvement 1</SheetTab>
      </SheetTabs>
      <Status>
        <StatusMain>Définir les propriétés des cotes sélectionnées.</StatusMain>
        <StatusItem $w={44}>79.14mm</StatusItem>
        <StatusItem $w={38}>55.65mm</StatusItem>
        <StatusItem $w={29}>0mm</StatusItem>
        <StatusItem $w={81}>Totalement contrainte</StatusItem>
        <StatusItem $w={68}>Edition: Esquisse1</StatusItem>
        <StatusItem $w={80}><Icon name="traffic" size={9} /></StatusItem>
        <StatusItem $w={43}>MMGS</StatusItem>
        <StatusItem $w={19}><Icon name="up" size={5} /></StatusItem>
        <StatusItem $w={12}><Icon name="plug" size={9} /></StatusItem>
      </Status>

      <Taskbar aria-label="Barre des tâches">
        <Start aria-label="Démarrer"><Icon name="windows" size={10} /></Start>
        <TaskSearch>
          <Icon name="searchWhite" size={10} />
          <input aria-label="Recherche" placeholder="Taper ici pour rechercher" />
          <Monument viewBox="1 0 44 24" aria-hidden="true">
            <path d="M13 23V8l10-5 10 5v15z" fill="#c99a52" />
            <path d="M12 9l3-5h16l3 5z" fill="#e3bd78" />
            <path d="M16 11v11M20 11v11M26 11v11M30 11v11" stroke="#f0d49a" strokeWidth="2" />
            <path d="M21 13h4v10h-4z" fill="#6c4520" />
            <path d="M10 20h26v4H10z" fill="#d7ad66" />
            <path d="M2 23q0-6 3-7-2-4 0-7 3-3 6 0 1 4-1 7 4 2 4 7z" fill="#d6d2cb" />
            <path d="M5 9q3-2 6 0v3H6z" fill="#aaa59c" />
            <path d="M36 6h7l-1.500 3q4 3 1.500 8l-2 6h-3l-2-6q-2-5 1.500-8z" fill="#c8682e" />
            <path d="M36 9q-3 2-1 5M43 9q3 2 1 5" fill="none" stroke="#c8682e" />
          </Monument>
        </TaskSearch>
        <Apps>
          {["edge", "explorer", "store", "mail", "shieldApp", "bugApp", "captureApp", "pApp", "opera", "uApp", "cApp", "swApp"].map((n) => (
            <AppButton key={n} $active={n === "swApp"} aria-label={n}><Icon name={n} size={14} /></AppButton>
          ))}
        </Apps>
        <Tray>
          {["trayEye", "trayShield", "trayRed", "trayGrid", "trayGuard", "trayCheck", "trayDefender", "battery", "wifi", "sound"].map((n, i) => (
            <TrayButton key={n} $w={i % 2 ? 14 : 15} aria-label={n}><Icon name={n} size={10} /></TrayButton>
          ))}
          <Clock>07:56<br />18/05/2024</Clock>
          <Notify aria-label="Notifications"><Icon name="note" size={10} /><Badge>2</Badge></Notify>
        </Tray>
      </Taskbar>
    </Page>
  );
}
